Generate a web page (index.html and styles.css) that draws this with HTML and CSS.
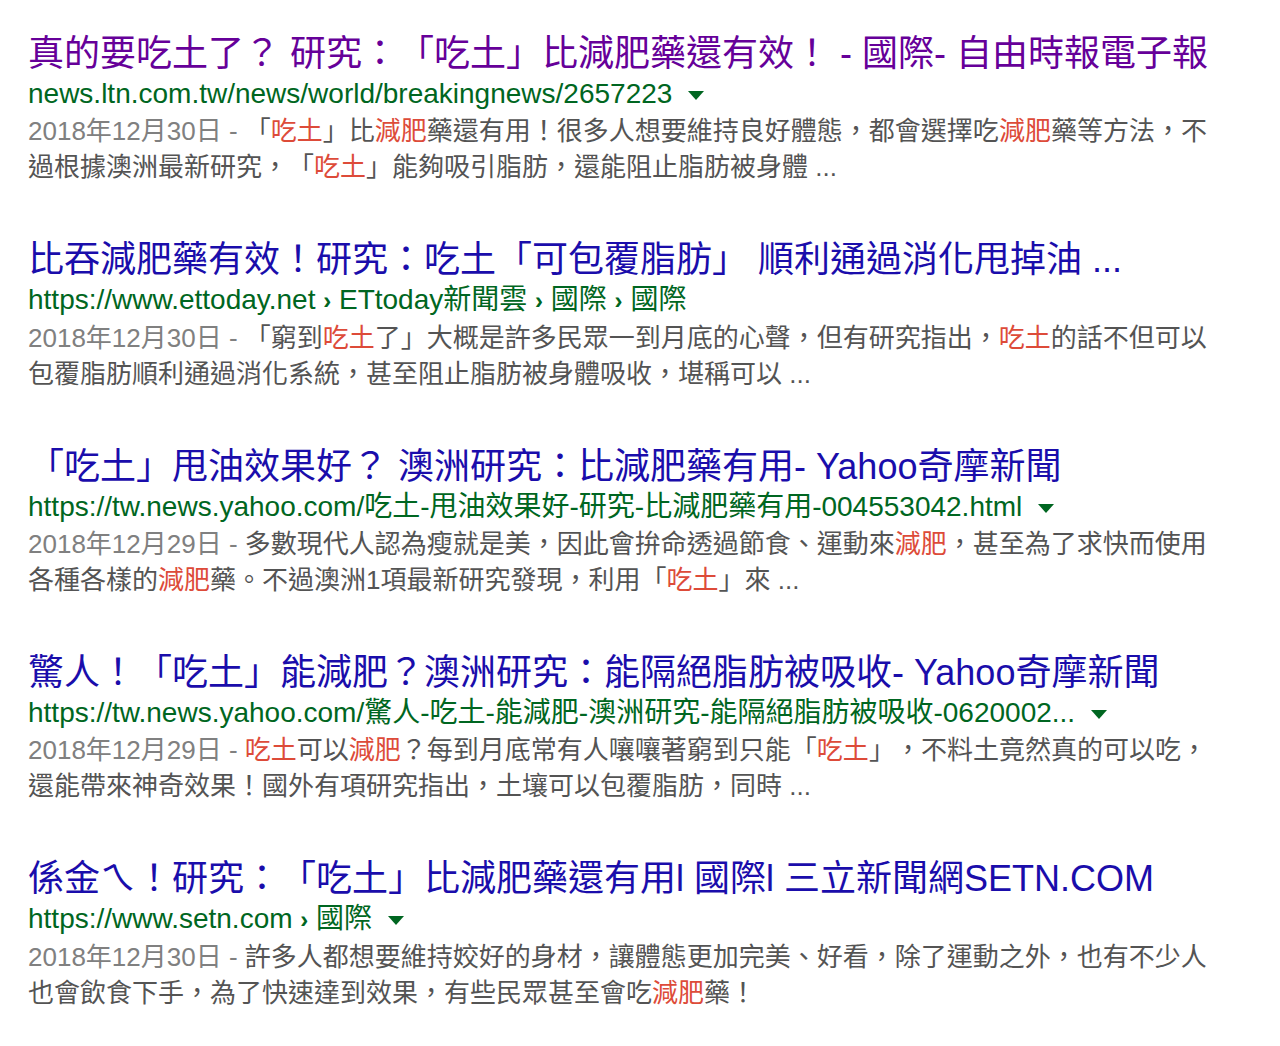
FILE: index.html
```html
<!DOCTYPE html>
<html lang="zh-TW">
<head>
    <meta charset="UTF-8">
    <meta name="viewport" content="width=device-width, initial-scale=1.0">
    <title>吃土 - 搜尋結果</title>
    <link rel="stylesheet" href="styles.css">
</head>
<body>
    <div class="results">

        <div class="result">
            <a class="title visited" href="#">真的要吃土了？ 研究：「吃土」比減肥藥還有效！ - 國際- 自由時報電子報</a>
            <div class="url">news.ltn.com.tw/news/world/breakingnews/2657223 <span class="arrow"></span></div>
            <p class="snippet"><span class="date">2018年12月30日 - </span>「<em>吃土</em>」比<em>減肥</em>藥還有用！很多人想要維持良好體態，都會選擇吃<em>減肥</em>藥等方法，不<br>過根據澳洲最新研究，「<em>吃土</em>」能夠吸引脂肪，還能阻止脂肪被身體 ...</p>
        </div>

        <div class="result">
            <a class="title" href="#">比吞減肥藥有效！研究：吃土「可包覆脂肪」 順利通過消化甩掉油 ...</a>
            <div class="url">https://www.ettoday.net <span class="sep">›</span> ETtoday新聞雲 <span class="sep">›</span> 國際 <span class="sep">›</span> 國際</div>
            <p class="snippet"><span class="date">2018年12月30日 - </span>「窮到<em>吃土</em>了」大概是許多民眾一到月底的心聲，但有研究指出，<em>吃土</em>的話不但可以<br>包覆脂肪順利通過消化系統，甚至阻止脂肪被身體吸收，堪稱可以 ...</p>
        </div>

        <div class="result">
            <a class="title" href="#">「吃土」甩油效果好？ 澳洲研究：比減肥藥有用- Yahoo奇摩新聞</a>
            <div class="url">https://tw.news.yahoo.com/吃土-甩油效果好-研究-比減肥藥有用-004553042.html <span class="arrow"></span></div>
            <p class="snippet"><span class="date">2018年12月29日 - </span>多數現代人認為瘦就是美，因此會拚命透過節食、運動來<em>減肥</em>，甚至為了求快而使用<br>各種各樣的<em>減肥</em>藥。不過澳洲1項最新研究發現，利用「<em>吃土</em>」來 ...</p>
        </div>

        <div class="result">
            <a class="title" href="#">驚人！「吃土」能減肥？澳洲研究：能隔絕脂肪被吸收- Yahoo奇摩新聞</a>
            <div class="url">https://tw.news.yahoo.com/驚人-吃土-能減肥-澳洲研究-能隔絕脂肪被吸收-0620002... <span class="arrow"></span></div>
            <p class="snippet"><span class="date">2018年12月29日 - </span><em>吃土</em>可以<em>減肥</em>？每到月底常有人嚷嚷著窮到只能「<em>吃土</em>」，不料土竟然真的可以吃，<br>還能帶來神奇效果！國外有項研究指出，土壤可以包覆脂肪，同時 ...</p>
        </div>

        <div class="result">
            <a class="title" href="#">係金ㄟ！研究：「吃土」比減肥藥還有用l 國際l 三立新聞網SETN.COM</a>
            <div class="url">https://www.setn.com <span class="sep">›</span> 國際 <span class="arrow"></span></div>
            <p class="snippet"><span class="date">2018年12月30日 - </span>許多人都想要維持姣好的身材，讓體態更加完美、好看，除了運動之外，也有不少人<br>也會飲食下手，為了快速達到效果，有些民眾甚至會吃<em>減肥</em>藥！</p>
        </div>

    </div>
</body>
</html>
```

FILE: styles.css
```css
body {
    margin: 0;
    padding: 33px 0 0 28px;
    background-color: #fff;
    font-family: "Liberation Sans", "Noto Sans CJK TC", sans-serif;
    text-spacing-trim: space-all;
}

a {
    text-decoration: none;
}

.results {
    width: 1200px;
}

.result {
    margin-bottom: 54px;
}

.title {
    display: block;
    font-size: 36px;
    line-height: 42px;
    color: #1a0dab;
    white-space: nowrap;
}
.title.visited {
    color: #660099;
}

.url {
    font-size: 28px;
    line-height: 38px;
    color: #006621;
    white-space: nowrap;
}
.url .sep {
    font-weight: bold;
    font-size: 24px;
}

/* petit triangle vert après l'url */
.arrow {
    display: inline-block;
    width: 0;
    height: 0;
    margin-left: 8px;
    vertical-align: middle;
    border-left: 8px solid transparent;
    border-right: 8px solid transparent;
    border-top: 9px solid #006621;
}

.snippet {
    margin: 0;
    font-size: 26px;
    line-height: 36px;
    color: #545454;
    white-space: nowrap;
}
.snippet .date {
    color: #808080;
}
.snippet em {
    font-style: normal;
    color: #dd4b39;
}
```
